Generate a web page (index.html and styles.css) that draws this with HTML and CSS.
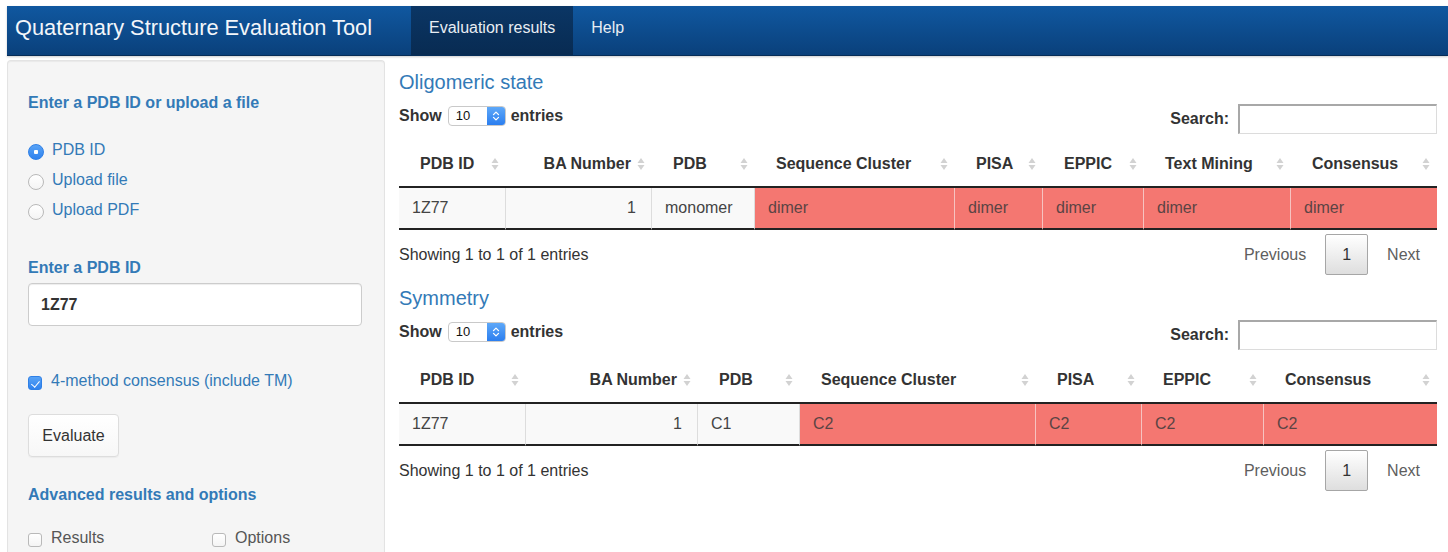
FILE: index.html
```html
<!DOCTYPE html>
<html lang="en">
<head>
<meta charset="utf-8">
<title>Quaternary Structure Evaluation Tool</title>
<link rel="stylesheet" href="styles.css">
</head>
<body>
<header class="navbar">
  <span class="brand">Quaternary Structure Evaluation Tool</span>
  <nav class="tabs">
    <a class="tab active">Evaluation results</a>
    <a class="tab">Help</a>
  </nav>
</header>

<div class="layout">
  <aside class="well">
    <h4 class="ctl-label first">Enter a PDB ID or upload a file</h4>
    <div class="radios">
      <label class="opt"><input type="radio" name="source" checked><span>PDB ID</span></label>
      <label class="opt"><input type="radio" name="source"><span>Upload file</span></label>
      <label class="opt"><input type="radio" name="source"><span>Upload PDF</span></label>
    </div>

    <h4 class="ctl-label pdb-label">Enter a PDB ID</h4>
    <input class="text-input" type="text" value="1Z77">

    <label class="opt check consensus"><input type="checkbox" checked><span>4-method consensus (include TM)</span></label>

    <button class="btn" type="button">Evaluate</button>

    <h4 class="ctl-label adv-label">Advanced results and options</h4>
    <div class="pair">
      <label class="opt check plain"><input type="checkbox"><span>Results</span></label>
      <label class="opt check plain"><input type="checkbox"><span>Options</span></label>
    </div>
  </aside>

  <main class="main">
    <section class="dt">
      <h3 class="dt-title">Oligomeric state</h3>
      <div class="dt-top">
        <div class="length">Show
          <span class="select"><span class="select-val">10</span><span class="select-btn"><svg width="8" height="12" viewBox="0 0 8 12"><path d="M1.5 4.6L4 2.1l2.5 2.5M1.5 7.4L4 9.9l2.5-2.5" fill="none" stroke="#fff" stroke-width="1.3" stroke-linecap="round" stroke-linejoin="round"/></svg></span></span>
        entries</div>
        <label class="filter">Search:<input class="search" type="search"></label>
      </div>
      <table class="grid oligo">
        <colgroup><col><col><col><col><col><col><col><col></colgroup>
        <thead>
          <tr>
            <th>PDB ID<svg class="sort" viewBox="0 0 8 16"><path d="M4 2l3.5 5h-7zM4 14l3.5-5h-7z"/></svg></th>
            <th class="num">BA Number<svg class="sort" viewBox="0 0 8 16"><path d="M4 2l3.5 5h-7zM4 14l3.5-5h-7z"/></svg></th>
            <th>PDB<svg class="sort" viewBox="0 0 8 16"><path d="M4 2l3.5 5h-7zM4 14l3.5-5h-7z"/></svg></th>
            <th>Sequence Cluster<svg class="sort" viewBox="0 0 8 16"><path d="M4 2l3.5 5h-7zM4 14l3.5-5h-7z"/></svg></th>
            <th>PISA<svg class="sort" viewBox="0 0 8 16"><path d="M4 2l3.5 5h-7zM4 14l3.5-5h-7z"/></svg></th>
            <th>EPPIC<svg class="sort" viewBox="0 0 8 16"><path d="M4 2l3.5 5h-7zM4 14l3.5-5h-7z"/></svg></th>
            <th>Text Mining<svg class="sort" viewBox="0 0 8 16"><path d="M4 2l3.5 5h-7zM4 14l3.5-5h-7z"/></svg></th>
            <th>Consensus<svg class="sort" viewBox="0 0 8 16"><path d="M4 2l3.5 5h-7zM4 14l3.5-5h-7z"/></svg></th>
          </tr>
        </thead>
        <tbody>
          <tr>
            <td>1Z77</td>
            <td class="num">1</td>
            <td>monomer</td>
            <td class="diff">dimer</td>
            <td class="diff">dimer</td>
            <td class="diff">dimer</td>
            <td class="diff">dimer</td>
            <td class="diff">dimer</td>
          </tr>
        </tbody>
      </table>
      <div class="dt-bottom">
        <div class="info">Showing 1 to 1 of 1 entries</div>
        <div class="paginate"><a class="pg">Previous</a><a class="pg current">1</a><a class="pg">Next</a></div>
      </div>
    </section>

    <section class="dt">
      <h3 class="dt-title">Symmetry</h3>
      <div class="dt-top">
        <div class="length">Show
          <span class="select"><span class="select-val">10</span><span class="select-btn"><svg width="8" height="12" viewBox="0 0 8 12"><path d="M1.5 4.6L4 2.1l2.5 2.5M1.5 7.4L4 9.9l2.5-2.5" fill="none" stroke="#fff" stroke-width="1.3" stroke-linecap="round" stroke-linejoin="round"/></svg></span></span>
        entries</div>
        <label class="filter">Search:<input class="search" type="search"></label>
      </div>
      <table class="grid sym">
        <colgroup><col><col><col><col><col><col><col></colgroup>
        <thead>
          <tr>
            <th>PDB ID<svg class="sort" viewBox="0 0 8 16"><path d="M4 2l3.5 5h-7zM4 14l3.5-5h-7z"/></svg></th>
            <th class="num">BA Number<svg class="sort" viewBox="0 0 8 16"><path d="M4 2l3.5 5h-7zM4 14l3.5-5h-7z"/></svg></th>
            <th>PDB<svg class="sort" viewBox="0 0 8 16"><path d="M4 2l3.5 5h-7zM4 14l3.5-5h-7z"/></svg></th>
            <th>Sequence Cluster<svg class="sort" viewBox="0 0 8 16"><path d="M4 2l3.5 5h-7zM4 14l3.5-5h-7z"/></svg></th>
            <th>PISA<svg class="sort" viewBox="0 0 8 16"><path d="M4 2l3.5 5h-7zM4 14l3.5-5h-7z"/></svg></th>
            <th>EPPIC<svg class="sort" viewBox="0 0 8 16"><path d="M4 2l3.5 5h-7zM4 14l3.5-5h-7z"/></svg></th>
            <th>Consensus<svg class="sort" viewBox="0 0 8 16"><path d="M4 2l3.5 5h-7zM4 14l3.5-5h-7z"/></svg></th>
          </tr>
        </thead>
        <tbody>
          <tr>
            <td>1Z77</td>
            <td class="num">1</td>
            <td>C1</td>
            <td class="diff">C2</td>
            <td class="diff">C2</td>
            <td class="diff">C2</td>
            <td class="diff">C2</td>
          </tr>
        </tbody>
      </table>
      <div class="dt-bottom">
        <div class="info">Showing 1 to 1 of 1 entries</div>
        <div class="paginate"><a class="pg">Previous</a><a class="pg current">1</a><a class="pg">Next</a></div>
      </div>
    </section>
  </main>
</div>
</body>
</html>
```

FILE: styles.css
```css
* { box-sizing: border-box; }

html, body {
  margin: 0;
  height: 100%;
  overflow: hidden;
}

body {
  padding: 6px 0 0 7px;
  background: #fff;
  color: #333;
  font-family: "Liberation Sans", Arial, Helvetica, sans-serif;
  font-size: 16px;
}

/* ---------- top navigation ---------- */
.navbar {
  display: flex;
  height: 50px;
  background: linear-gradient(#1058a0, #0a407b);
  border-bottom: 1px solid #062d57;
  box-shadow: 0 1px 2px rgba(0, 0, 0, 0.2);
}

.brand {
  flex: 0 0 404px;
  padding-left: 8px;
  line-height: 44px;
  font-size: 21.8px;
  color: #f3f6fa;
  white-space: nowrap;
}

.tabs { display: flex; }

.tab {
  padding: 0 17px 0 18px;
  line-height: 44px;
  font-size: 16px;
  color: #e8edf3;
  cursor: pointer;
}

.tab.active {
  padding-right: 18px;
  background: linear-gradient(#0b3665, #082b52);
}

/* ---------- page body ---------- */
.layout { display: flex; }

/* the well runs on past the bottom of the window */
.well {
  flex: 0 0 378px;
  height: 492px;
  margin-top: 4px;
  padding: 20px;
  background: #f5f5f5;
  border: 1px solid #e3e3e3;
  border-bottom: 0;
  border-radius: 4px 4px 0 0;
  box-shadow: inset 0 1px 1px rgba(0, 0, 0, 0.05);
}

.ctl-label {
  margin: 0;
  font-size: 16px;
  font-weight: bold;
  line-height: 22px;
  color: #337ab7;
}

.ctl-label.first { margin-top: 11px; }
.ctl-label.pdb-label { margin-top: 32px; }
.ctl-label.adv-label { margin-top: 27px; }

.radios { margin-top: 21px; }

.opt {
  display: flex;
  align-items: center;
  gap: 8px;
  height: 30px;
  color: #337ab7;
  line-height: 22px;
  cursor: pointer;
}

.opt input {
  flex: 0 0 auto;
  appearance: none;
  -webkit-appearance: none;
  width: 16px;
  height: 16px;
  margin: 4px 0 0 0;
  background: linear-gradient(#fff, #f4f4f4);
  border: 1px solid #b9b9b9;
  border-radius: 50%;
}

.opt input[type="radio"]:checked {
  border-color: #2f80e6;
  background: radial-gradient(circle, #fff 0 2px, transparent 2.5px), linear-gradient(#58a3f6, #2f82ee);
}

.opt input[type="checkbox"] {
  width: 14px;
  height: 14px;
  border-radius: 3px;
  margin-left: 0;
  position: relative;
}

.opt input[type="checkbox"]:checked {
  border-color: #2f80e6;
  background: linear-gradient(#58a3f6, #2f82ee);
}

/* check mark drawn with two borders */
.opt input[type="checkbox"]:checked::after {
  content: "";
  position: absolute;
  left: 4px;
  top: 1.5px;
  width: 3.5px;
  height: 7px;
  border: solid #fff;
  border-width: 0 1.5px 1.5px 0;
  transform: rotate(40deg);
}

.opt.check { height: 22px; gap: 9px; }

.consensus { margin-top: 44px; }

.opt.plain { color: #555; }

.text-input {
  display: block;
  width: 334px;
  height: 43px;
  margin-top: 4px;
  padding: 0 12px;
  font-family: inherit;
  font-size: 16px;
  font-weight: bold;
  color: #333;
  background: #fff;
  border: 1px solid #ccc;
  border-radius: 4px;
  box-shadow: inset 0 1px 1px rgba(0, 0, 0, 0.075);
}

.btn {
  display: block;
  width: 91px;
  height: 43px;
  margin-top: 22px;
  padding: 0;
  font-family: inherit;
  font-size: 16px;
  color: #333;
  background: linear-gradient(#fff, #f7f7f7);
  border: 1px solid #ddd;
  border-radius: 4px;
  box-shadow: 0 1px 1px rgba(0, 0, 0, 0.04);
}

.pair {
  display: grid;
  grid-template-columns: 184px auto;
  margin-top: 21px;
}

/* ---------- results ---------- */
.main {
  flex: 1;
  margin: 0 11px 0 14px;
  min-width: 0;
}

.dt-title {
  margin: 14px 0 0;
  font-size: 20px;
  font-weight: normal;
  line-height: 24px;
  color: #337ab7;
}

.dt + .dt .dt-title { margin-top: 11px; }

.dt-top {
  display: flex;
  justify-content: space-between;
  align-items: flex-start;
  height: 30px;
  margin-top: 10px;
}

.length {
  display: flex;
  align-items: center;
  height: 20px;
  margin-top: 2px;
  font-weight: bold;
}

.select {
  display: inline-flex;
  width: 58px;
  height: 20px;
  margin: 0 5px 0 6px;
  overflow: hidden;
  background: #fff;
  border: 1px solid #c9c9c9;
  border-radius: 4px;
  font-size: 13px;
  font-weight: normal;
}

.select-val {
  flex: 1;
  padding-left: 7px;
  line-height: 18px;
  color: #111;
}

.select-btn {
  display: flex;
  align-items: center;
  justify-content: center;
  width: 18px;
  background: linear-gradient(#5ea8f8, #2b7eef);
}

.filter {
  display: flex;
  align-items: center;
  height: 30px;
  font-weight: bold;
}

.search {
  width: 199px;
  height: 30px;
  margin-left: 9px;
  padding: 0 4px;
  font-family: inherit;
  font-size: 14px;
  border-style: solid;
  border-width: 2px 1px 1px 2px;
  border-color: #a8a8a8 #dcdcdc #dcdcdc #a8a8a8;
  background: #fff;
}

.grid {
  width: 100%;
  margin-top: 7px;
  table-layout: fixed;
  border-collapse: separate;
  border-spacing: 0;
}

.oligo col:nth-child(1) { width: 107px; }
.oligo col:nth-child(2) { width: 146px; }
.oligo col:nth-child(3) { width: 103px; }
.oligo col:nth-child(4) { width: 200px; }
.oligo col:nth-child(5) { width: 88px; }
.oligo col:nth-child(6) { width: 101px; }
.oligo col:nth-child(7) { width: 147px; }
.oligo col:nth-child(8) { width: 146px; }

.sym col:nth-child(1) { width: 127px; }
.sym col:nth-child(2) { width: 172px; }
.sym col:nth-child(3) { width: 102px; }
.sym col:nth-child(4) { width: 236px; }
.sym col:nth-child(5) { width: 106px; }
.sym col:nth-child(6) { width: 122px; }
.sym col:nth-child(7) { width: 173px; }

.grid th {
  position: relative;
  padding: 12px 21px 11px 21px;
  line-height: 22px;
  font-weight: bold;
  text-align: left;
  color: #333;
  white-space: nowrap;
  border-bottom: 2px solid #222;
}

.grid th.num { text-align: right; }

.sort {
  position: absolute;
  right: 7px;
  top: 50%;
  width: 8px;
  height: 16px;
  margin-top: -8px;
  fill: #d2d2d2;
}

.grid td {
  padding: 9px 13px;
  line-height: 22px;
  color: #444;
  background: #f9f9f9;
  border-right: 1px solid #ddd;
  border-bottom: 2px solid #222;
  white-space: nowrap;
}

.grid td:last-child { border-right: none; }

.grid td.num {
  text-align: right;
  padding-right: 15px;
}

.grid td.diff {
  background: #f47771;
  color: #5b4444;
  border-right-color: #f6c3c0;
}

.dt-bottom {
  display: flex;
  justify-content: space-between;
  align-items: center;
  margin-top: 4px;
}

.info { color: #333; }

.paginate { display: flex; }

.pg {
  margin-left: 2px;
  padding: 8px 16px;
  line-height: 23px;
  color: #5e5e5e;
  border: 1px solid transparent;
  border-radius: 2px;
  cursor: pointer;
}

.pg.current {
  color: #333;
  background: linear-gradient(#fff, #dedede);
  border-color: #a6a6a6;
}
```
